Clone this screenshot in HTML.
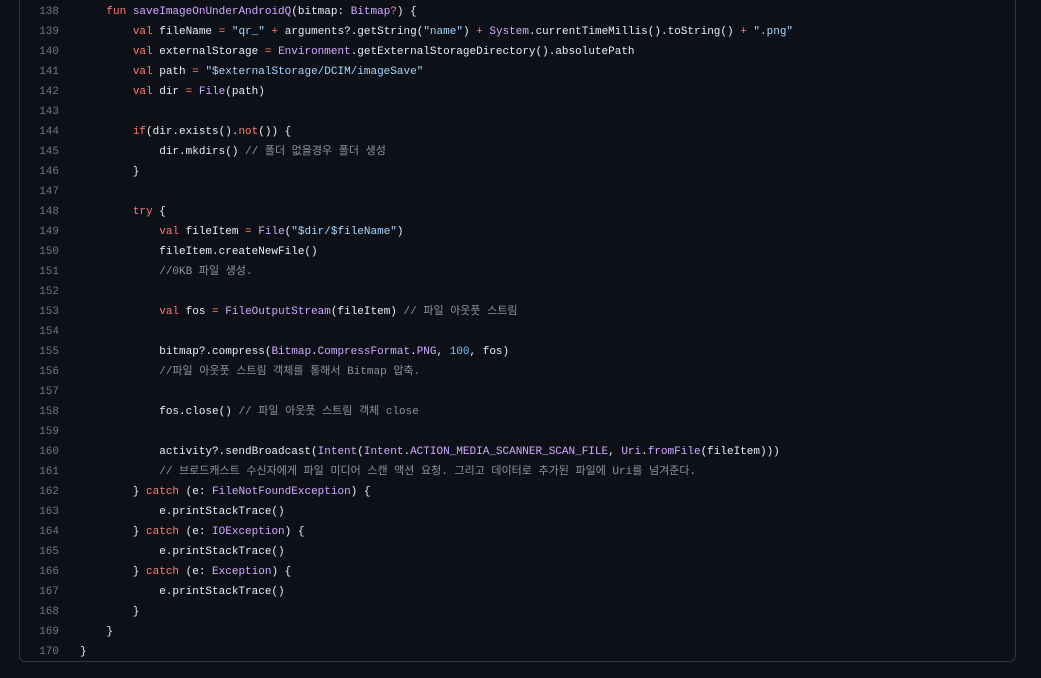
<!DOCTYPE html>
<html><head><meta charset="utf-8"><style>
html,body{margin:0;padding:0;background:#0d1117;width:1041px;height:678px;overflow:hidden}
.box{position:absolute;left:19px;top:-20px;width:997px;height:682px;border:1px solid #30363d;border-radius:6px;box-sizing:border-box}
.code{position:absolute;left:0;top:2px;width:1041px;font-family:"Liberation Mono","Noto Sans CJK KR",monospace;font-size:11px;color:#e6edf3}
.l{height:20px;line-height:20px;position:relative}
.n{position:absolute;left:0;width:59px;text-align:right;color:#6e7681}
.c{position:absolute;left:80px;white-space:pre}
.k{color:#ff7b72}.s{color:#a5d6ff}.f{color:#d2a8ff}.m{color:#8b949e}.b{color:#79c0ff}
</style></head><body>
<div class="box"></div>
<div class="code">
<div class="l"><span class="n">138</span><span class="c">    <span class="k">fun</span> <span class="f">saveImageOnUnderAndroidQ</span>(bitmap: <span class="f">Bitmap</span><span class="k">?</span>) {</span></div>
<div class="l"><span class="n">139</span><span class="c">        <span class="k">val</span> fileName <span class="k">=</span> <span class="s">"qr_"</span> <span class="k">+</span> arguments?.getString(<span class="s">"name"</span>) <span class="k">+</span> <span class="f">System</span>.currentTimeMillis().toString() <span class="k">+</span> <span class="s">".png"</span></span></div>
<div class="l"><span class="n">140</span><span class="c">        <span class="k">val</span> externalStorage <span class="k">=</span> <span class="f">Environment</span>.getExternalStorageDirectory().absolutePath</span></div>
<div class="l"><span class="n">141</span><span class="c">        <span class="k">val</span> path <span class="k">=</span> <span class="s">"$externalStorage/DCIM/imageSave"</span></span></div>
<div class="l"><span class="n">142</span><span class="c">        <span class="k">val</span> dir <span class="k">=</span> <span class="f">File</span>(path)</span></div>
<div class="l"><span class="n">143</span><span class="c"></span></div>
<div class="l"><span class="n">144</span><span class="c">        <span class="k">if</span>(dir.exists().<span class="k">not</span>()) {</span></div>
<div class="l"><span class="n">145</span><span class="c">            dir.mkdirs() <span class="m">// 폴더 없을경우 폴더 생성</span></span></div>
<div class="l"><span class="n">146</span><span class="c">        }</span></div>
<div class="l"><span class="n">147</span><span class="c"></span></div>
<div class="l"><span class="n">148</span><span class="c">        <span class="k">try</span> {</span></div>
<div class="l"><span class="n">149</span><span class="c">            <span class="k">val</span> fileItem <span class="k">=</span> <span class="f">File</span>(<span class="s">"$dir/$fileName"</span>)</span></div>
<div class="l"><span class="n">150</span><span class="c">            fileItem.createNewFile()</span></div>
<div class="l"><span class="n">151</span><span class="c">            <span class="m">//0KB 파일 생성.</span></span></div>
<div class="l"><span class="n">152</span><span class="c"></span></div>
<div class="l"><span class="n">153</span><span class="c">            <span class="k">val</span> fos <span class="k">=</span> <span class="f">FileOutputStream</span>(fileItem) <span class="m">// 파일 아웃풋 스트림</span></span></div>
<div class="l"><span class="n">154</span><span class="c"></span></div>
<div class="l"><span class="n">155</span><span class="c">            bitmap?.compress(<span class="f">Bitmap</span>.<span class="f">CompressFormat</span>.<span class="f">PNG</span>, <span class="b">100</span>, fos)</span></div>
<div class="l"><span class="n">156</span><span class="c">            <span class="m">//파일 아웃풋 스트림 객체를 통해서 Bitmap 압축.</span></span></div>
<div class="l"><span class="n">157</span><span class="c"></span></div>
<div class="l"><span class="n">158</span><span class="c">            fos.close() <span class="m">// 파일 아웃풋 스트림 객체 close</span></span></div>
<div class="l"><span class="n">159</span><span class="c"></span></div>
<div class="l"><span class="n">160</span><span class="c">            activity?.sendBroadcast(<span class="f">Intent</span>(<span class="f">Intent</span>.<span class="f">ACTION_MEDIA_SCANNER_SCAN_FILE</span>, <span class="f">Uri</span>.<span class="f">fromFile</span>(fileItem)))</span></div>
<div class="l"><span class="n">161</span><span class="c">            <span class="m">// 브로드캐스트 수신자에게 파일 미디어 스캔 액션 요청. 그리고 데이터로 추가된 파일에 Uri를 넘겨준다.</span></span></div>
<div class="l"><span class="n">162</span><span class="c">        } <span class="k">catch</span> (e: <span class="f">FileNotFoundException</span>) {</span></div>
<div class="l"><span class="n">163</span><span class="c">            e.printStackTrace()</span></div>
<div class="l"><span class="n">164</span><span class="c">        } <span class="k">catch</span> (e: <span class="f">IOException</span>) {</span></div>
<div class="l"><span class="n">165</span><span class="c">            e.printStackTrace()</span></div>
<div class="l"><span class="n">166</span><span class="c">        } <span class="k">catch</span> (e: <span class="f">Exception</span>) {</span></div>
<div class="l"><span class="n">167</span><span class="c">            e.printStackTrace()</span></div>
<div class="l"><span class="n">168</span><span class="c">        }</span></div>
<div class="l"><span class="n">169</span><span class="c">    }</span></div>
<div class="l"><span class="n">170</span><span class="c">}</span></div>
</div>
</body></html>
